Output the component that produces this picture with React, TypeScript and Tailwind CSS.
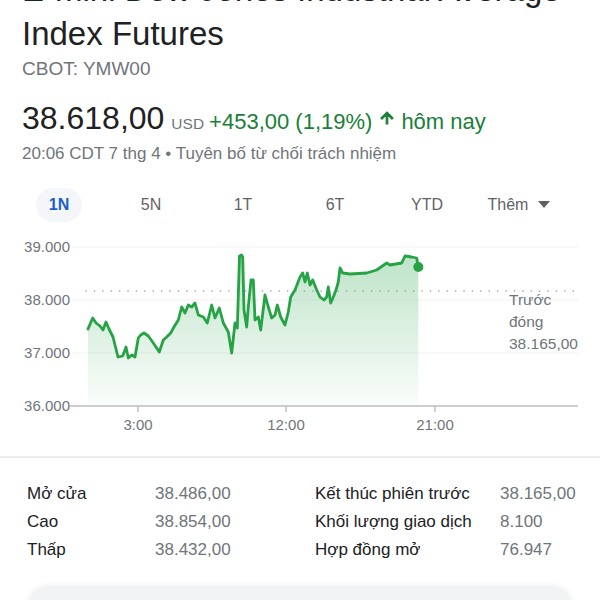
const points: [number, number][] = [
  [88, 329], [92.7, 318], [96, 323], [100, 326], [103, 330], [106, 322], [109, 329], [113, 337],
  [118, 357], [122.7, 356], [126, 347], [128.3, 358], [131.7, 355], [135, 357], [138.3, 338],
  [140.7, 335], [144, 333], [148.3, 336], [153.3, 343], [159.3, 352], [163.3, 340], [166.7, 337],
  [170.7, 333], [174, 327], [178.3, 320], [181.7, 307], [185, 313], [188.3, 305], [191.7, 307],
  [195, 303], [198.3, 315], [203.3, 317], [207.3, 323], [211.7, 305], [215, 318], [219.3, 308],
  [223.3, 323], [228.3, 332], [231.7, 353], [235, 323], [237.3, 328], [239.5, 256], [241.5, 255],
  [242.7, 257], [244, 310], [246.7, 327], [248.3, 307], [251, 280], [253.3, 280], [255, 320],
  [258.3, 317], [260.7, 330], [265, 295], [268.3, 307], [271.7, 318], [275, 315], [277.3, 305],
  [280.7, 317], [285, 325], [288.3, 312], [290.7, 297], [295, 290], [300, 277], [302.7, 273],
  [305, 282], [307.3, 273], [310, 285], [312.7, 280], [316.7, 290], [320, 297], [324, 300],
  [326.7, 297], [328.3, 287], [330.7, 303], [333.3, 297], [336, 290], [338.3, 282], [340, 268],
  [342.7, 273], [350, 274], [366.7, 273], [376.7, 270], [386.7, 263], [390, 265], [401.7, 263],
  [405, 256], [411.7, 257], [416.7, 258], [418.3, 267],
]

const linePath = points.map(([x, y], i) => `${i === 0 ? 'M' : 'L'}${x} ${y}`).join(' ')
const areaPath = `${linePath} L418.3 406 L88 406 Z`

const tabs = ['1N', '5N', '1T', '6T', 'YTD']

const stats = [
  ['Mở cửa', '38.486,00', 'Kết thúc phiên trước', '38.165,00'],
  ['Cao', '38.854,00', 'Khối lượng giao dịch', '8.100'],
  ['Thấp', '38.432,00', 'Hợp đồng mở', '76.947'],
]

function Chart() {
  const font = { fontFamily: '"Liberation Sans", Arial, sans-serif' }
  return (
    <svg width={600} height={228} viewBox="0 222 600 228" className="block">
      <defs>
        <linearGradient id="fill" x1="0" y1="0" x2="0" y2="1">
          <stop offset="0%" stopColor="#34a853" stopOpacity="0.32" />
          <stop offset="100%" stopColor="#34a853" stopOpacity="0.02" />
        </linearGradient>
      </defs>
      {[247, 300, 353].map((y) => (
        <line key={y} x1={72} x2={578} y1={y} y2={y} stroke="#f1f1f1" strokeWidth={1} />
      ))}
      <g fill="#70757a" fontSize={15} style={font} textAnchor="end">
        <text x={70} y={252}>39.000</text>
        <text x={70} y={305}>38.000</text>
        <text x={70} y={358}>37.000</text>
        <text x={70} y={411}>36.000</text>
      </g>
      <path d={areaPath} fill="url(#fill)" />
      <line x1={86} x2={578} y1={291} y2={291} stroke="#9aa0a6" strokeWidth={1.6} strokeDasharray="0.1 8.3" strokeLinecap="round" />
      <path d={linePath} fill="none" stroke="#26a345" strokeWidth={2.8} strokeLinejoin="round" strokeLinecap="round" />
      <circle cx={418.3} cy={267} r={5} fill="#26a345" />
      <line x1={70} x2={578} y1={406} y2={406} stroke="#bdbdbd" strokeWidth={1.6} />
      {[138, 286, 435].map((x) => (
        <line key={x} x1={x} x2={x} y1={406} y2={412} stroke="#bdbdbd" strokeWidth={1.4} />
      ))}
      <g fill="#70757a" fontSize={15} style={font} textAnchor="middle">
        <text x={138} y={430}>3:00</text>
        <text x={286} y={430}>12:00</text>
        <text x={435} y={430}>21:00</text>
      </g>
      <g fill="#70757a" fontSize={15.5} style={font}>
        <text x={509} y={305}>Trước</text>
        <text x={509} y={327}>đóng</text>
        <text x={509} y={349}>38.165,00</text>
      </g>
    </svg>
  )
}

export default function App() {
  return (
    <div className="w-[600px] h-[600px] overflow-hidden bg-white font-['Liberation_Sans',Arial,sans-serif] text-[#202124]">
      <div className="px-[22px]">
        <h1 className="-mt-[32px] w-[575px] text-[33px] leading-[44px] font-normal">
          E-mini Dow Jones Industrial Average Index Futures
        </h1>
        <div className="text-[19px] leading-[26px] text-[#70757a]">CBOT: YMW00</div>
        <div className="mt-[16px] flex items-baseline h-[40px] leading-[40px] whitespace-nowrap">
          <span className="text-[32px]">38.618,00</span>
          <span className="ml-[7px] text-[15.5px] text-[#70757a]">USD</span>
          <span className="ml-[5px] text-[22px] text-[#188038]">+453,00 (1,19%)</span>
          <svg viewBox="0 0 24 24" className="ml-[6px] w-[18px] h-[18px] self-center fill-[#188038]">
            <path d="M4 12l1.41 1.41L11 7.83V20h2V7.83l5.58 5.59L20 12l-8-8-8 8z" stroke="#188038" strokeWidth={1.6} />
          </svg>
          <span className="ml-[5px] text-[22px] text-[#188038]">hôm nay</span>
        </div>
        <div className="mt-[5px] text-[17px] leading-[22px] text-[#70757a]">
          20:06 CDT 7 thg 4 • Tuyên bố từ chối trách nhiệm
        </div>
      </div>

      <div className="mt-[23px] px-[13px] grid grid-cols-[repeat(6,92px)] h-[34px]">
        {tabs.map((t, i) => (
          <div key={t} className="flex items-center justify-center">
            {i === 0 ? (
              <span className="w-[46px] h-[34px] rounded-full bg-[#f4f6f9] flex items-center justify-center text-[16px] font-bold text-[#1a5fc9]">
                {t}
              </span>
            ) : (
              <span className="text-[16px] text-[#5f6368]">{t}</span>
            )}
          </div>
        ))}
        <div className="flex items-center justify-center gap-[10px] text-[16px] text-[#5f6368]">
          <span>Thêm</span>
          <svg viewBox="0 0 12 8" className="w-[12px] h-[8px] fill-[#5f6368]">
            <path d="M0 0h12L6 7z" />
          </svg>
        </div>
      </div>

      <Chart />

      <div className="mt-[6px] h-[2px] bg-[#ececec]" />

      <div className="mt-[22px] px-[27px]">
        {stats.map((r) => (
          <div key={r[0]} className="grid grid-cols-[128px_160px_185px_1fr] h-[28px] items-center text-[17px] whitespace-nowrap">
            <span>{r[0]}</span>
            <span className="text-[#70757a]">{r[1]}</span>
            <span>{r[2]}</span>
            <span className="text-[#70757a]">{r[3]}</span>
          </div>
        ))}
      </div>

      <div className="mt-[24px] mx-[28px] h-[40px] rounded-[20px] bg-[#f1f3f4] shadow-[0_-2px_6px_rgba(0,0,0,0.08)]" />
    </div>
  )
}
